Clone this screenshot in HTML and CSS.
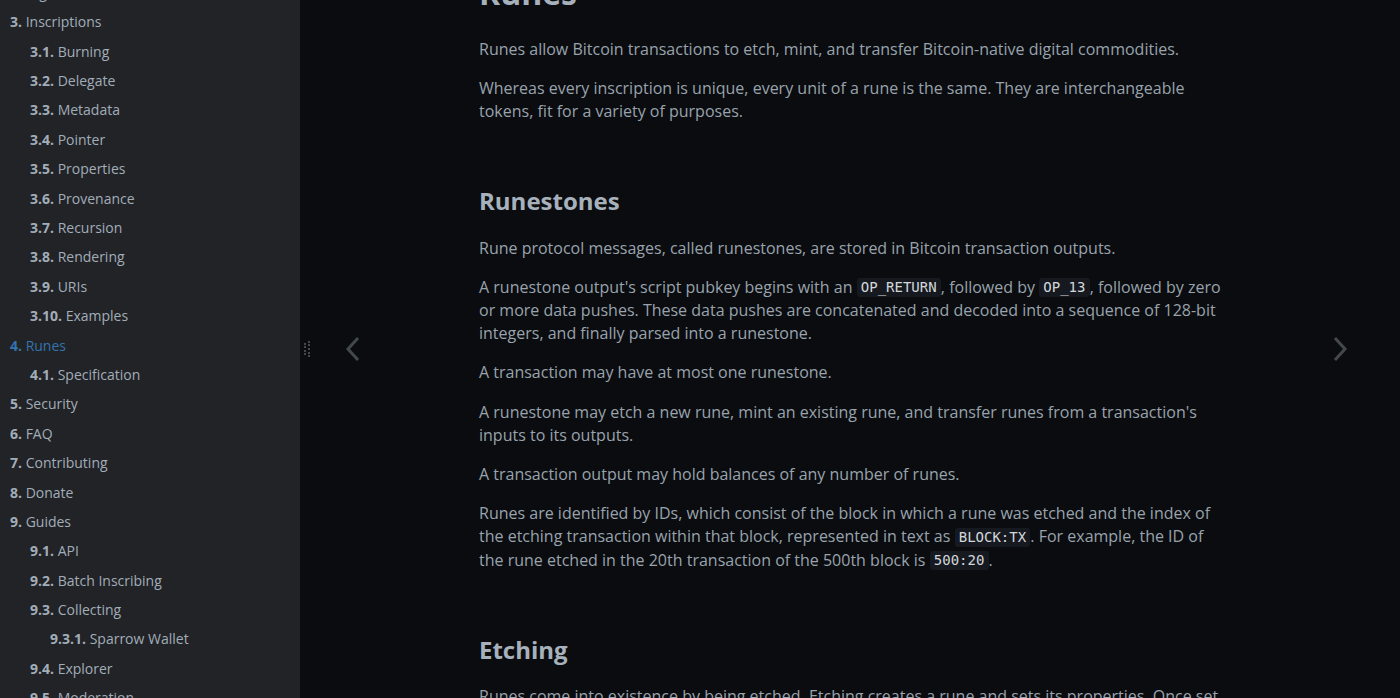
FILE: index.html
```html
<!DOCTYPE html>
<html lang="en" class="coal">
<head>
    <meta charset="UTF-8">
    <meta name="viewport" content="width=device-width, initial-scale=1.0">
    <title>Runes - Ordinal Theory Handbook</title>
    <link rel="stylesheet" href="styles.css">
</head>
<body>
    <nav class="sidebar">
        <div class="sidebar-scrollbox">
            <ol class="chapter">
                <li class="chapter-item"><a href="#"><strong>2.</strong> Digital Artifacts</a></li>
                <li class="chapter-item"><a href="#"><strong>3.</strong> Inscriptions</a></li>
                <li>
                    <ol class="section">
                        <li class="chapter-item"><a href="#"><strong>3.1.</strong> Burning</a></li>
                        <li class="chapter-item"><a href="#"><strong>3.2.</strong> Delegate</a></li>
                        <li class="chapter-item"><a href="#"><strong>3.3.</strong> Metadata</a></li>
                        <li class="chapter-item"><a href="#"><strong>3.4.</strong> Pointer</a></li>
                        <li class="chapter-item"><a href="#"><strong>3.5.</strong> Properties</a></li>
                        <li class="chapter-item"><a href="#"><strong>3.6.</strong> Provenance</a></li>
                        <li class="chapter-item"><a href="#"><strong>3.7.</strong> Recursion</a></li>
                        <li class="chapter-item"><a href="#"><strong>3.8.</strong> Rendering</a></li>
                        <li class="chapter-item"><a href="#"><strong>3.9.</strong> URIs</a></li>
                        <li class="chapter-item"><a href="#"><strong>3.10.</strong> Examples</a></li>
                    </ol>
                </li>
                <li class="chapter-item"><a href="#" class="active"><strong>4.</strong> Runes</a></li>
                <li>
                    <ol class="section">
                        <li class="chapter-item"><a href="#"><strong>4.1.</strong> Specification</a></li>
                    </ol>
                </li>
                <li class="chapter-item"><a href="#"><strong>5.</strong> Security</a></li>
                <li class="chapter-item"><a href="#"><strong>6.</strong> FAQ</a></li>
                <li class="chapter-item"><a href="#"><strong>7.</strong> Contributing</a></li>
                <li class="chapter-item"><a href="#"><strong>8.</strong> Donate</a></li>
                <li class="chapter-item"><a href="#"><strong>9.</strong> Guides</a></li>
                <li>
                    <ol class="section">
                        <li class="chapter-item"><a href="#"><strong>9.1.</strong> API</a></li>
                        <li class="chapter-item"><a href="#"><strong>9.2.</strong> Batch Inscribing</a></li>
                        <li class="chapter-item"><a href="#"><strong>9.3.</strong> Collecting</a></li>
                        <li>
                            <ol class="section">
                                <li class="chapter-item"><a href="#"><strong>9.3.1.</strong> Sparrow Wallet</a></li>
                            </ol>
                        </li>
                        <li class="chapter-item"><a href="#"><strong>9.4.</strong> Explorer</a></li>
                        <li class="chapter-item"><a href="#"><strong>9.5.</strong> Moderation</a></li>
                        <li class="chapter-item"><a href="#"><strong>9.6.</strong> Reindexing</a></li>
                        <li class="chapter-item"><a href="#"><strong>9.7.</strong> Sat Hunting</a></li>
                    </ol>
                </li>
            </ol>
        </div>
    </nav>

    <div class="sidebar-resize-handle">
        <div class="sidebar-resize-indicator"></div>
    </div>

    <div class="page-wrapper">
        <div class="page">
            <div class="content">
                <main>
                    <h1>Runes</h1>
                    <p>Runes allow Bitcoin transactions to etch, mint, and transfer Bitcoin-native digital commodities.</p>
                    <p>Whereas every inscription is unique, every unit of a rune is the same. They are interchangeable tokens, fit for a variety of purposes.</p>

                    <h2>Runestones</h2>
                    <p>Rune protocol messages, called runestones, are stored in Bitcoin transaction outputs.</p>
                    <p>A runestone output's script pubkey begins with an <code>OP_RETURN</code>, followed by <code>OP_13</code>, followed by zero or more data pushes. These data pushes are concatenated and decoded into a sequence of 128-bit integers, and finally parsed into a runestone.</p>
                    <p>A transaction may have at most one runestone.</p>
                    <p>A runestone may etch a new rune, mint an existing rune, and transfer runes from a transaction's inputs to its outputs.</p>
                    <p>A transaction output may hold balances of any number of runes.</p>
                    <p>Runes are identified by IDs, which consist of the block in which a rune was etched and the index of the etching transaction within that block, represented in text as <code>BLOCK:TX</code>. For example, the ID of the rune etched in the 20th transaction of the 500th block is <code>500:20</code>.</p>

                    <h2>Etching</h2>
                    <p>Runes come into existence by being etched. Etching creates a rune and sets its properties. Once set, these properties are immutable, even to its etcher.</p>
                </main>
            </div>
        </div>

        <!-- chapter navigation arrows, fixed over the page -->
        <nav class="nav-wide-wrapper">
            <a href="#" class="nav-chapters previous" title="Previous chapter">
                <svg width="16" height="26" viewBox="0 0 16 26"><polyline points="13,2 3,13 13,24" fill="none" stroke="currentColor" stroke-width="3"/></svg>
            </a>
            <a href="#" class="nav-chapters next" title="Next chapter">
                <svg width="16" height="26" viewBox="0 0 16 26"><polyline points="3,2 13,13 3,24" fill="none" stroke="currentColor" stroke-width="3"/></svg>
            </a>
        </nav>
    </div>
</body>
</html>
```

FILE: styles.css
```css
:root {
    --bg: #0b0c0f;
    --fg: #98a3ad;
    --sidebar-bg: #212327;
    --sidebar-fg: #a1adb8;
    --sidebar-active: #3473ad;
    --icons: #43484d;
    --inline-code-bg: #161a20;
    --inline-code-color: #d3d7db;
}

html, body {
    height: 100%;
    overflow: hidden;
}
body {
    margin: 0;
    display: flex;
    background: var(--bg);
    color: var(--fg);
    font-family: "Open Sans", sans-serif;
    font-size: 16px;
    line-height: 1.45;
}

/* sidebar */
.sidebar {
    flex: none;
    width: 300px;
    height: 100%;
    overflow: hidden;
    background: var(--sidebar-bg);
    color: var(--sidebar-fg);
    font-size: 14px;
}
.sidebar-scrollbox {
    padding: 0 10px;
}
.chapter {
    list-style: none;
    margin: -26.5px 0 0;
    padding: 0;
    line-height: 2.2em;
}
.chapter li {
    display: block;
}
.chapter li.chapter-item {
    line-height: 1.5em;
    margin-top: 0.6em;
}
.chapter li a {
    color: var(--sidebar-fg);
    text-decoration: none;
}
.chapter li a.active {
    color: var(--sidebar-active);
}
.section {
    list-style: none;
    margin: 0;
    padding-left: 20px;
}

.sidebar-resize-handle {
    flex: none;
    width: 8px;
    height: 100%;
    display: flex;
    align-items: center;
}
.sidebar-resize-indicator {
    display: flex;
    align-items: center;
    height: 16px;
    margin-left: 4px;
    color: var(--icons);
}
.sidebar-resize-indicator::before,
.sidebar-resize-indicator::after {
    content: "";
    width: 2px;
    border-left: dotted 2px currentColor;
}
.sidebar-resize-indicator::before {
    height: 12px;
}
.sidebar-resize-indicator::after {
    height: 16px;
}

/* page */
.page-wrapper {
    flex: 1;
    min-width: 0;
    height: 100%;
    overflow: hidden;
}
.page {
    padding: 0 15px;
}
.content {
    padding: 0 5px 50px;
}
.content main {
    max-width: 750px;
    margin: -30px auto 0;
}

h1, h2 {
    color: #a6b1bc;
    font-weight: 700;
}
h1 {
    font-size: 2em;
    margin: 0 0 0.67em;
}
h2 {
    font-size: 1.5em;
    margin: 61px 0 17.5px;
}
p {
    margin: 1em 0;
}
code {
    font-family: "DejaVu Sans Mono", monospace;
    font-size: 0.875em;
    padding: 0.1em 0.3em;
    border-radius: 3px;
    background: var(--inline-code-bg);
    color: var(--inline-code-color);
}

/* prev / next chapter */
.nav-chapters {
    position: fixed;
    top: 0;
    bottom: 0;
    width: 90px;
    display: flex;
    align-items: center;
    justify-content: center;
    color: var(--icons);
}
.previous {
    left: 308px;
}
.next {
    right: 15px;
}
```
